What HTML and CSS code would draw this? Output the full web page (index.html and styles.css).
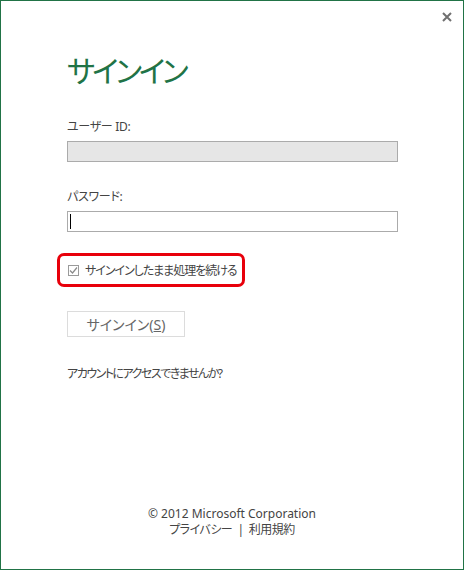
FILE: index.html
```html
<!DOCTYPE html>
<html lang="ja">

<head>
    <meta charset="UTF-8">
    <title>サインイン</title>
    <link rel="stylesheet" href="styles.css">
</head>

<body>
    <div class="window">
        <button class="close-button" type="button" aria-label="閉じる">
            <svg width="10" height="10" viewBox="0 0 10 10">
                <path d="M1 1 L9 9 M9 1 L1 9" stroke="#707070" stroke-width="2" />
            </svg>
        </button>

        <div class="content">
            <h1 class="title">サインイン</h1>

            <div class="field">
                <label class="field-label">ユーザー ID:</label>
                <div class="text-box disabled"></div>
            </div>

            <div class="field">
                <label class="field-label">パスワード:</label>
                <div class="text-box"><span class="caret"></span></div>
            </div>

            <label class="keep-signed">
                <span class="check-box">
                    <svg width="9" height="9" viewBox="0 0 9 9">
                        <path d="M1 4.5 L3.5 7 L8 1.5" fill="none" stroke="#8a8a8a" stroke-width="1.2" />
                    </svg>
                </span>
                <span>サインインしたまま処理を続ける</span>
            </label>

            <button class="signin-button" type="button">サインイン(<u>S</u>)</button>

            <a class="help-link">アカウントにアクセスできませんか?</a>
        </div>

        <footer class="footer">
            <div>© 2012 Microsoft Corporation</div>
            <div class="footer-links">プライバシー &nbsp;|&nbsp; 利用規約</div>
        </footer>
    </div>
</body>

</html>
```

FILE: styles.css
```css
body {
    margin: 0;
    font-family: "Noto Sans", "Noto Sans CJK JP", sans-serif;
    color: #444;
    font-size: 12px;
}

.window {
    position: relative;
    width: 464px;
    height: 570px;
    box-sizing: border-box;
    border: 1px solid #217346;
    background: #fff;
    display: flex;
    flex-direction: column;
}

.close-button {
    position: absolute;
    top: 10px;
    right: 10px;
    width: 12px;
    height: 12px;
    padding: 0;
    border: none;
    background: none;
    display: flex;
    align-items: center;
    justify-content: center;
}

.content {
    padding: 0 0 0 66px;
    display: flex;
    flex-direction: column;
    align-items: flex-start;
    font-feature-settings: "palt";
    letter-spacing: -1px;
}

.title {
    margin: 49px 0 0;
    font-size: 30px;
    line-height: 41px;
    font-weight: normal;
    letter-spacing: -3.2px;
    color: #217346;
}

.field {
    display: flex;
    flex-direction: column;
    gap: 6px;
}

.field:first-of-type {
    margin-top: 28px;
}

.field + .field {
    margin-top: 27px;
}

.field-label {
    line-height: 16px;
    letter-spacing: -0.3px;
}

.text-box {
    width: 331px;
    height: 21px;
    box-sizing: border-box;
    border: 1px solid #ababab;
    background: #fff;
    display: flex;
    align-items: center;
    padding-left: 2px;
}

.text-box.disabled {
    background: #e6e6e6;
}

.caret {
    width: 1px;
    height: 15px;
    background: #000;
}

.keep-signed {
    margin: 21px 0 0 -10px;
    padding: 6px 5px 5px 8px;
    border: 3px solid #e8000b;
    border-radius: 7px;
    display: flex;
    align-items: center;
    gap: 6px;
    line-height: 17px;
}

.check-box {
    width: 11px;
    height: 11px;
    box-sizing: border-box;
    border: 1px solid #9a9a9a;
    display: flex;
    align-items: center;
    justify-content: center;
}

.signin-button {
    margin-top: 24px;
    width: 118px;
    height: 26px;
    border: 1px solid #dcdcdc;
    background: #fff;
    color: #666;
    font-family: inherit;
    font-size: 14px;
    font-feature-settings: "palt";
    padding: 0;
}

.help-link {
    margin-top: 29px;
    line-height: 16px;
    color: #444;
    letter-spacing: -1.5px;
}

.footer {
    margin-top: auto;
    padding-bottom: 31px;
    text-align: center;
    line-height: 16px;
    font-feature-settings: "palt";
}

.footer-links {
    letter-spacing: -0.5px;
}
```
